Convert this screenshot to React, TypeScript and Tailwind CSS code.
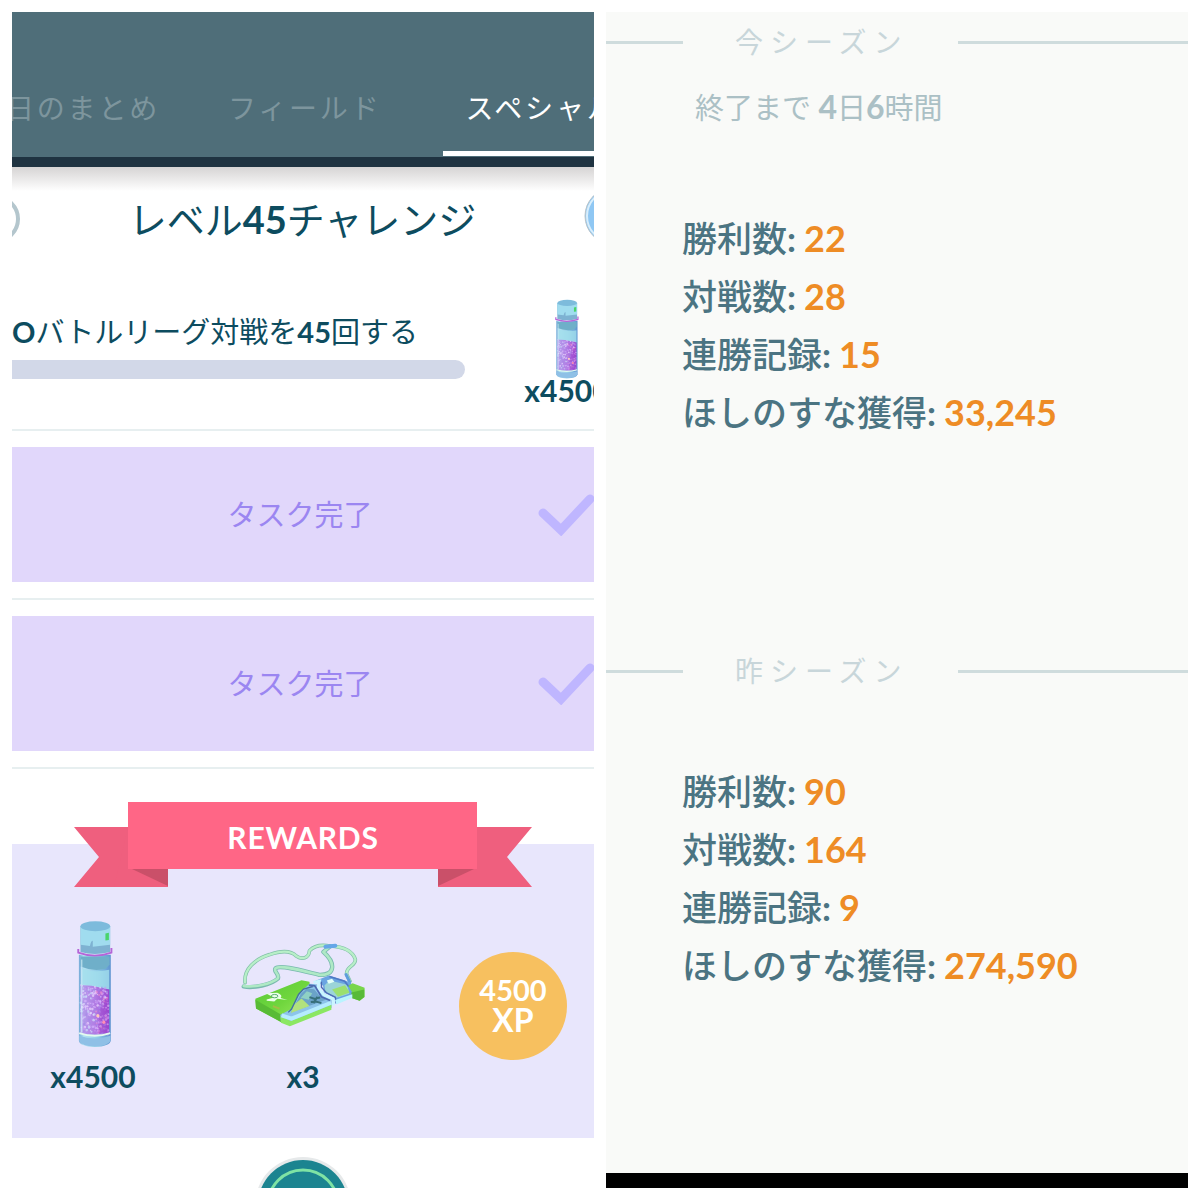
import { useId } from "react";

const TABS = [
  { label: "日のまとめ", className: "-ml-[6px] mr-[46px] text-[#7d959d] border-transparent" },
  { label: "フィールド", className: "pl-[22px] pr-[62px] text-[#7d959d] border-transparent" },
  { label: "スペシャル", className: "grow pl-[22px] text-white border-white" },
];

const SEASONS = [
  {
    title: "今シーズン",
    stats: [
      { label: "勝利数", value: "22" },
      { label: "対戦数", value: "28" },
      { label: "連勝記録", value: "15" },
      { label: "ほしのすな獲得", value: "33,245" },
    ],
  },
  {
    title: "昨シーズン",
    stats: [
      { label: "勝利数", value: "90" },
      { label: "対戦数", value: "164" },
      { label: "連勝記録", value: "9" },
      { label: "ほしのすな獲得", value: "274,590" },
    ],
  },
];

// Scattered glitter inside the bottle, fixed so it never changes between renders
const SPARKLES = Array.from({ length: 260 }, (_, i) => {
  const u = (i * 0.61803) % 1;
  const v = (i * i * 0.0731 + i * 0.317) % 1;
  return {
    x: 126 + u * 88,
    y: 252 + u * 10 + v * 140,
    r: 2 + (i % 3),
    fill: ["#f0dcff", "#c79af2", "#a58be8", u > 0.5 ? "#f08cd0" : "#cfe0fa", "#d9b8ff"][i % 5],
  };
});

function Bottle({ className }: { className: string }) {
  const id = useId();
  return (
    <svg viewBox="114 55 114 388" preserveAspectRatio="none" className={className} aria-hidden="true">
      <defs>
        <linearGradient id={`${id}glass`} x1="0" x2="1">
          <stop offset="0" stopColor="#74a9d8" />
          <stop offset="0.15" stopColor="#b5e3f2" />
          <stop offset="0.6" stopColor="#8fcbe6" />
          <stop offset="1" stopColor="#5c92d0" />
        </linearGradient>
        <linearGradient id={`${id}dust`} x1="0" x2="1">
          <stop offset="0" stopColor="#b3a4ec" />
          <stop offset="0.5" stopColor="#b27ce4" />
          <stop offset="1" stopColor="#9a48d0" />
        </linearGradient>
      </defs>
      <path d="M120 160V420Q122 438 170 440Q218 438 221 420V160Z" fill={`url(#${id}glass)`} />
      <path d="M125 166V196Q165 212 205 203L217 190V166Z" fill="#6fafc9" />
      <path d="M130 202Q165 216 216 206V266L180 262Q150 252 130 250Z" fill="#a3dfec" opacity="0.8" />
      <path d="M124 252L160 254L216 266V398Q170 408 124 398Z" fill={`url(#${id}dust)`} />
      {SPARKLES.map((s, i) => (
        <circle key={i} cx={s.x} cy={s.y} r={s.r} fill={s.fill} opacity="0.65" />
      ))}
      <path d="M192 300L214 290V396L178 398Z" fill="#a03ccb" opacity="0.3" />
      <circle cx="180" cy="345" r="5" fill="#ffc9bd" />
      <circle cx="199" cy="365" r="5" fill="#ff8fb5" />
      <path d="M121 398Q170 414 219 398" fill="none" stroke="#e3fbef" strokeWidth="6" />
      <path d="M121 406V422Q130 438 170 438Q210 438 220 422V406Q170 422 121 406Z" fill="#8fc0e6" />
      <path d="M129 175V396" stroke="#d8f4fb" strokeWidth="4" opacity="0.7" />
      <path d="M125 74V152Q170 164 219 152V74Z" fill="#7eb2d2" />
      <path d="M125 74V130L155 134Q158 118 164 118V136L219 130V74Z" fill="#a0dcef" />
      <ellipse cx="172" cy="74" rx="47" ry="15" fill="#7dbbdc" />
      <path d="M204 96L215 94V116L204 117Z" fill="#49d46c" />
      <path d="M118 143V154Q170 172 223 154V140" fill="none" stroke="#b565d8" strokeWidth="6" />
    </svg>
  );
}

function RaidPass() {
  return (
    <svg viewBox="34 38 376 256" className="h-[85px] w-[125px]" aria-hidden="true">
      <defs>
        <linearGradient id="card" x1="0" x2="1" y1="0" y2="1">
          <stop offset="0" stopColor="#58c83a" />
          <stop offset="0.5" stopColor="#6fd63d" />
          <stop offset="1" stopColor="#a0ec62" />
        </linearGradient>
      </defs>
      {/* lanyard */}
      <g fill="none" strokeLinejoin="round" strokeLinecap="round">
        <path
          d="M46 160C42 120 75 90 120 76C160 62 186 66 200 80C218 92 238 88 240 64C255 48 275 45 302 50C340 52 370 65 378 90C381 110 348 112 352 135L362 156"
          stroke="#7fbfa6"
          strokeWidth="11"
        />
        <path
          d="M46 160C42 120 75 90 120 76C160 62 186 66 200 80C218 92 238 88 240 64C255 48 275 45 302 50C340 52 370 65 378 90C381 110 348 112 352 135L362 156"
          stroke="#b8efc8"
          strokeWidth="7"
        />
        <path
          d="M42 172C70 178 125 167 145 148C150 132 130 128 138 117C150 105 220 125 270 137C320 138 318 100 282 68L302 51"
          stroke="#79b9ae"
          strokeWidth="13"
        />
        <path
          d="M42 170C70 176 125 165 145 147C150 132 130 128 138 117C150 105 220 125 270 137C320 138 318 100 282 68L302 51"
          stroke="#aee9c5"
          strokeWidth="8"
        />
        <path d="M288 52L318 49" stroke="#64a6e8" strokeWidth="12" />
        <path d="M350 136L361 158" stroke="#5e9ddc" strokeWidth="9" />
      </g>
      {/* left half */}
      <path d="M77 209L216 153L240 158L246 230L155 262L154 279L79 238Z" fill="url(#card)" />
      <path d="M77 212L154 256V279L79 238Z" fill="#58bb35" />
      <path d="M152 257L186 240L212 190L240 164L262 165L280 190L307 207V236L182 286L154 276Z" fill="#8cc4ea" />
      <path d="M184 250L214 194L232 178L254 180L272 202L290 212Z" fill="#6ba3c8" />
      <path d="M184 252L192 228L216 208L240 231Z" fill="#b2e27c" />
      <path d="M214 206L232 186L248 192L238 212Z" fill="#8fd0c4" />
      <path d="M153 262L184 276L306 227V242L181 292L154 281Z" fill="#8be763" />
      <path d="M156 259L186 269L305 221" fill="none" stroke="#b5ecff" strokeWidth="12" />
      <path d="M176 250L186 240L207 196L222 180L250 172" fill="none" stroke="#4470a0" strokeWidth="4" />
      <path d="M240 204L254 209L272 205M244 219L259 217L276 222M264 203L252 222" stroke="#37707c" strokeWidth="6" fill="none" />
      {/* right half */}
      <path d="M258 155L299 139L365 160L376 201L319 225L314 206L283 189L281 170Z" fill="#6aa4e2" />
      <path d="M285 169L300 154L354 167L360 194L322 206L288 187Z" fill="#9bd4d8" />
      <path d="M308 181L347 168L361 190L326 203Z" fill="#9be070" />
      <path d="M292 154L308 149L315 158L298 164Z" fill="#e4fff9" />
      <path d="M300 142L346 156L358 172" fill="none" stroke="#4f78c4" strokeWidth="5" />
      <path d="M252 160L270 156L266 176L284 198L312 210V229" fill="none" stroke="#caf5ff" strokeWidth="9" />
      <path d="M238 168L256 170L276 203L302 214" fill="none" stroke="#4d69b1" strokeWidth="5" />
      <path d="M276 158L276 174L291 191L318 204L320 222" fill="none" stroke="#4d69b1" strokeWidth="4" />
      <path d="M357 170L370 162L406 176V204L391 215L368 207L369 190Z" fill="#78d64a" />
      <path d="M366 190L405 181V204L391 215L367 207Z" fill="#58ba38" />
      <path d="M317 213L369 195V206L321 226Z" fill="#baf4ff" />
      {/* emblem */}
      <path d="M111 211L133 205L108 192L143 191Q161 198 153 207L174 213L143 209L134 217L111 215Z" fill="#eaffe9" />
      <ellipse cx="135" cy="201" rx="10" ry="5" fill="none" stroke="#59ac75" strokeWidth="3" />
      <path d="M130 231L150 239" stroke="#a4bc47" strokeWidth="6" />
    </svg>
  );
}

function Ribbon() {
  return (
    <div className="relative mx-auto h-[86px] w-[458px]">
      <svg viewBox="0 0 458 86" className="h-[86px] w-[458px]" aria-hidden="true">
        <path d="M0 26H60L94 86H0L25 56Z" fill="#ef5f7e" />
        <path d="M54 26V68H94V86H40Z" fill="#ef5f7e" />
        <path d="M458 26H403V68H364V86H458L433 56Z" fill="#ef5f7e" />
        <path d="M58 68H94V85Z" fill="#ca5069" />
        <path d="M400 68H364V85Z" fill="#ca5069" />
        <path d="M54 1H403V68H54Z" fill="#ff6686" />
      </svg>
      <h3 className="absolute inset-x-0 top-4 text-center text-[30px] leading-10 font-bold tracking-wide text-white">
        REWARDS
      </h3>
    </div>
  );
}

function CompletedTask() {
  return (
    <div className="mt-4 flex h-[135px] items-center justify-end bg-[#e1d7fb]">
      <p className="flex-1 pl-[50px] text-center text-[29px] leading-8 text-[#9b86f1]">タスク完了</p>
      <svg viewBox="0 0 56 42" className="h-[42px] w-[56px]" fill="none" aria-hidden="true">
        <path d="M5 19L23 36L52 5" stroke="#bfb6ff" strokeWidth="9" strokeLinecap="round" />
      </svg>
    </div>
  );
}

function Divider() {
  return <hr className="mt-4 border-t-2 border-[#e7eff0]" />;
}

function ResearchPanel() {
  return (
    <section className="flex min-w-0 flex-1 flex-col overflow-hidden bg-white text-[#0d4c5f]">
      <nav className="flex border-b-[10px] border-[#1f3341] bg-[#4f6e79] pt-[76px] pb-px">
        {TABS.map((tab) => (
          <button
            key={tab.label}
            className={`flex-none border-b-[5px] pb-[23px] text-left text-[28px] leading-10 tracking-widest whitespace-nowrap ${tab.className}`}
          >
            {tab.label}
          </button>
        ))}
      </nav>
      <div className="h-6 bg-linear-to-b from-[#d6d4d4] to-white" />

      <div className="mt-1 flex items-center justify-between">
        <svg viewBox="0 0 9 48" className="h-12 w-[9px]" fill="none" aria-hidden="true">
          <circle cx="-16" cy="24" r="22" stroke="#b4c6cd" strokeWidth="4" />
        </svg>
        <h2 className="text-[38px] leading-10 whitespace-nowrap">
          レベル<b>45</b>チャレンジ
        </h2>
        <svg viewBox="0 0 10 60" className="-my-[10px] h-[60px] w-[10px]" aria-hidden="true">
          <circle cx="29" cy="27" r="28" fill="#8fc7f3" stroke="#b9c3c8" strokeWidth="1" />
          <circle cx="29" cy="27" r="26" fill="none" stroke="#d9eefb" strokeWidth="2" />
        </svg>
      </div>

      <div className="mt-14 flex">
        <div className="flex-1 pt-[17px]">
          <p className="text-[29px] leading-8 whitespace-nowrap">
            <b>O</b>バトルリーグ対戦を<b>45</b>回する
          </p>
          <div
            role="progressbar"
            aria-valuenow={0}
            aria-valuemin={0}
            aria-valuemax={45}
            aria-label="対戦"
            className="mt-3 h-[19px] rounded-r-full bg-[#d2d8e8]"
          />
        </div>
        <div className="-mr-[17px] ml-[58px] flex w-[88px] flex-col items-center">
          <Bottle className="h-20 w-6" />
          <p className="-mt-px text-[30px] leading-6 font-bold">x4500</p>
        </div>
      </div>

      <hr className="mt-[27px] border-t-2 border-[#e7eff0]" />
      <CompletedTask />
      <Divider />
      <CompletedTask />
      <Divider />

      <div className="mt-8">
        <Ribbon />
        <div className="-mt-[43px] bg-[#e8e6fc] pt-[76px] pb-[46px]">
          <ul className="-mx-6 grid grid-cols-3 justify-items-center">
            <li className="flex flex-col items-center">
              <Bottle className="ml-1 h-32 w-9" />
              <p className="mt-3 text-[30px] leading-8 font-bold">x4500</p>
            </li>
            <li className="flex flex-col items-center">
              <div className="flex h-32 items-center">
                <RaidPass />
              </div>
              <p className="mt-3 text-[30px] leading-8 font-bold">x3</p>
            </li>
            <li className="flex size-[108px] flex-col items-center justify-center self-center rounded-full bg-[#f7c05f] text-white">
              <span className="text-[29px] leading-7 font-bold">4500</span>
              <span className="text-[32px] leading-8 font-bold">XP</span>
            </li>
          </ul>
        </div>
      </div>

      <button aria-label="閉じる" className="mx-auto mt-[19px]">
        <svg viewBox="0 0 96 31" className="block h-[31px] w-24" aria-hidden="true">
          <circle cx="48" cy="48" r="48" fill="#e6e9ea" />
          <circle cx="48" cy="48" r="45" fill="#1c8490" />
          <circle cx="48" cy="48" r="35" fill="none" stroke="#7fe3a4" strokeWidth="3" />
        </svg>
      </button>
    </section>
  );
}

function SeasonHeading({ title }: { title: string }) {
  return (
    <div className="flex items-center">
      <hr className="w-[77px] border-t-[3px] border-[#cfdcdd]" />
      <h2 className="ml-[52px] w-[223px] text-[28px] leading-10 tracking-[0.25em] whitespace-nowrap text-[#c8d6da]">
        {title}
      </h2>
      <hr className="flex-1 border-t-[3px] border-[#cfdcdd]" />
    </div>
  );
}

function SeasonStats({ stats }: { stats: { label: string; value: string }[] }) {
  return (
    <dl className="pl-[76px] text-[35px] leading-[58px] whitespace-nowrap">
      {stats.map((s) => (
        <div key={s.label} className="flex gap-2">
          <dt className="font-medium text-[#4b7482]">
            {s.label}
            <b>:</b>
          </dt>
          <dd className="text-[36px] font-bold text-[#ee8c25]">{s.value}</dd>
        </div>
      ))}
    </dl>
  );
}

function LeaguePanel() {
  const [current, previous] = SEASONS;
  return (
    <section className="flex min-w-0 flex-1 flex-col overflow-hidden border-b-[15px] border-black bg-[#f9faf8] pt-[10px]">
      <SeasonHeading title={current.title} />
      <p className="mt-[25px] mb-[81px] pl-[89px] text-[29px] leading-10 whitespace-nowrap text-[#abc0c5]">
        終了まで <b className="text-[32px]">4</b>日<b className="text-[32px]">6</b>時間
      </p>
      <SeasonStats stats={current.stats} />
      <div className="mt-[210px] mb-[71px]">
        <SeasonHeading title={previous.title} />
      </div>
      <SeasonStats stats={previous.stats} />
    </section>
  );
}

export default function App() {
  return (
    <main className="flex min-h-screen gap-3 bg-white p-3 font-['Lato','Noto_Sans_CJK_JP',sans-serif]" lang="ja">
      <ResearchPanel />
      <LeaguePanel />
    </main>
  );
}
